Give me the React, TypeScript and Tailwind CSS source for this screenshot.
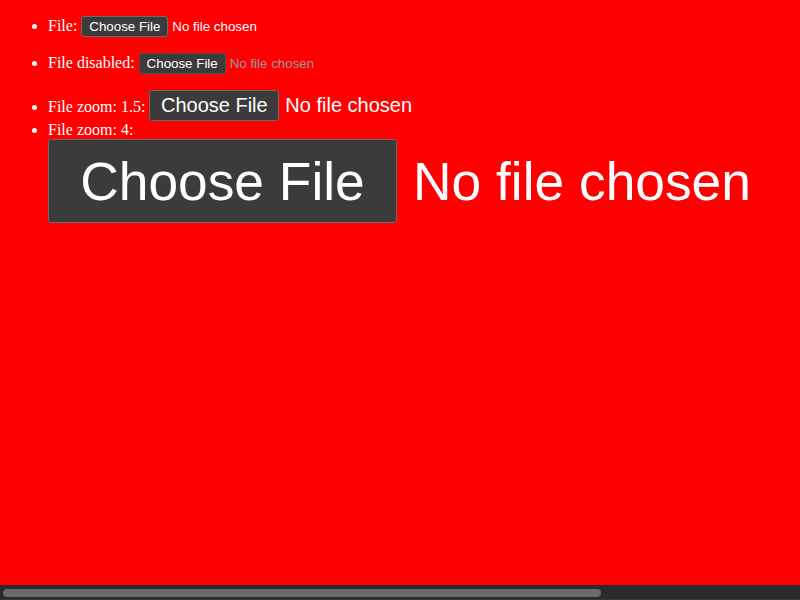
import React from "react";

type Size = "sm" | "md" | "lg";

const sizes: Record<Size, { wrap: string; btn: string }> = {
  sm: {
    wrap: "w-[252px] text-[13.333px]",
    btn: "w-[87px] h-[21px] mr-[4px] rounded-[3px]",
  },
  md: {
    wrap: "w-[378px] text-[20px]",
    btn: "w-[130px] h-[31px] mr-[6px] rounded-[3px]",
  },
  lg: {
    wrap: "w-[1008px] text-[53.333px]",
    btn: "w-[349px] h-[84px] mr-[16px] rounded-[3px]",
  },
};

function FileInput({ disabled = false, size = "sm" }: { disabled?: boolean; size?: Size }) {
  const s = sizes[size];
  return (
    <span
      className={`inline-block whitespace-nowrap align-baseline font-['Liberation_Sans',Arial,sans-serif] leading-[normal] ${s.wrap}`}
    >
      <span
        className={`inline-flex items-center justify-center border bg-[#3b3b3b] text-white ${s.btn} ${
          disabled ? "border-[#505050]" : "border-[#6b6b6b]"
        }`}
      >
        Choose File
      </span>
      <span className={disabled ? "text-[#9a9a9a]" : "text-white"}>No file chosen</span>
    </span>
  );
}

export default function App() {
  return (
    <div className="h-screen w-screen flex flex-col overflow-hidden bg-[#ff0000] text-white font-['Liberation_Serif',serif] text-[16px] leading-[normal]">
      <div className="flex-1 min-h-0 overflow-hidden">
        <div className="w-[1064px] px-2 pt-4">
          <ul className="list-disc pl-10">
            <li className="mb-4">
              File: <FileInput />
            </li>
            <li className="mb-4">
              File disabled: <FileInput disabled />
            </li>
            <li>
              File zoom: 1.5: <FileInput size="md" />
            </li>
            <li>
              File zoom: 4: <FileInput size="lg" />
            </li>
          </ul>
        </div>
      </div>
      <div className="h-[15px] shrink-0 bg-[#2b2b2b] border-b border-[#3a3a3a] pl-[3px] pt-[4px]">
        <div className="h-[8px] w-[598px] rounded-full bg-[#6b6b6b]" />
      </div>
    </div>
  );
}
